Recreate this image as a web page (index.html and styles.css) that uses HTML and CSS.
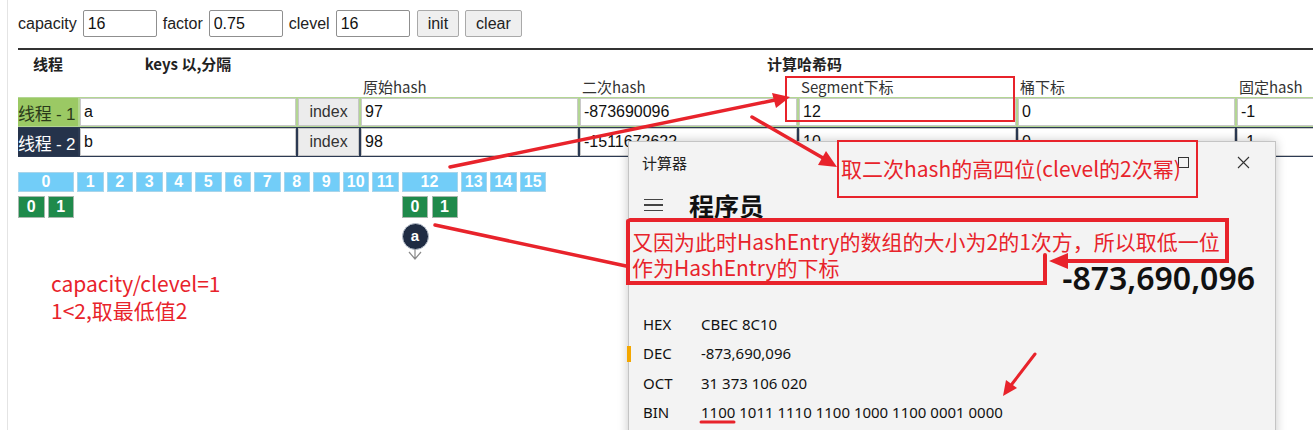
FILE: index.html
```html
<!DOCTYPE html>
<html>
<head>
<meta charset="utf-8">
<link rel="stylesheet" href="styles.css">
</head>
<body>
<div class="page">
  <div class="toolbar">
    <span class="lbl">capacity</span><input class="num" value="16">
    <span class="lbl">factor</span><input class="num" value="0.75">
    <span class="lbl">clevel</span><input class="num" value="16">
    <button class="btn btn-init">init</button><button class="btn">clear</button>
  </div>
  <div class="rule"></div>
  <div class="head1">
    <div class="c-label center">线程</div>
    <div class="c-keys center">keys 以,分隔</div>
    <div class="c-btn"></div>
    <div class="c-calc">计算哈希码</div>
  </div>
  <div class="head2">
    <div class="c-label"></div>
    <div class="c-keys"></div>
    <div class="c-btn"></div>
    <div class="c-val">原始hash</div>
    <div class="c-val">二次hash</div>
    <div class="c-val">Segment下标</div>
    <div class="c-val">桶下标</div>
    <div class="c-val">固定hash</div>
  </div>
  <div class="row r1">
    <div class="c-label tag">线程 - 1</div>
    <input class="c-keys field" value="a">
    <button class="c-btn idx">index</button>
    <input class="c-val field" value="97">
    <input class="c-val field" value="-873690096">
    <input class="c-val field" value="12">
    <input class="c-val field" value="0">
    <input class="c-val field" value="-1">
  </div>
  <div class="row r2">
    <div class="c-label tag">线程 - 2</div>
    <input class="c-keys field" value="b">
    <button class="c-btn idx">index</button>
    <input class="c-val field" value="98">
    <input class="c-val field" value="-1511672622">
    <input class="c-val field" value="10">
    <input class="c-val field" value="0">
    <input class="c-val field" value="-1">
  </div>

  <div class="segments">
    <div class="seg wide"><div class="sh">0</div><div class="entries"><div class="en">0</div><div class="en">1</div></div></div>
    <div class="seg"><div class="sh">1</div></div>
    <div class="seg"><div class="sh">2</div></div>
    <div class="seg"><div class="sh">3</div></div>
    <div class="seg"><div class="sh">4</div></div>
    <div class="seg"><div class="sh">5</div></div>
    <div class="seg"><div class="sh">6</div></div>
    <div class="seg"><div class="sh">7</div></div>
    <div class="seg"><div class="sh">8</div></div>
    <div class="seg"><div class="sh">9</div></div>
    <div class="seg"><div class="sh">10</div></div>
    <div class="seg"><div class="sh">11</div></div>
    <div class="seg wide"><div class="sh">12</div><div class="entries">
      <div class="entry-col"><div class="en">0</div><div class="node">a</div>
        <svg class="node-arrow" width="16" height="11" viewBox="0 0 16 11"><path d="M8 0 V10 M2 3 L8 10 L14 3" fill="none" stroke="#8a8a8a" stroke-width="1.2"/></svg>
      </div>
      <div class="en">1</div></div></div>
    <div class="seg"><div class="sh">13</div></div>
    <div class="seg"><div class="sh">14</div></div>
    <div class="seg"><div class="sh">15</div></div>
  </div>
</div>

<div class="calc">
  <div class="calc-title">
    <span class="calc-name">计算器</span>
    <span class="ctl-max"></span>
    <svg class="ctl-close" width="13" height="13" viewBox="0 0 13 13"><path d="M1 1 L12 12 M12 1 L1 12" stroke="#333" stroke-width="1.1"/></svg>
  </div>
  <div class="calc-mode">
    <span class="burger"><i></i><i></i><i></i></span>
    <span class="mode">程序员</span>
  </div>
  <div class="calc-display">-873,690,096</div>
  <div class="radix">
    <div class="rrow"><span class="rl">HEX</span><span>CBEC 8C10</span></div>
    <div class="rrow sel"><span class="rl">DEC</span><span>-873,690,096</span></div>
    <div class="rrow"><span class="rl">OCT</span><span>31 373 106 020</span></div>
    <div class="rrow"><span class="rl">BIN</span><span>1100 1011 1110 1100 1000 1100 0001 0000</span></div>
  </div>
</div>

<svg class="marks" width="1313" height="430" viewBox="0 0 1313 430">
  <g fill="none" stroke="#e8232b" stroke-linecap="round">
    <rect x="786" y="77" width="228" height="44" stroke-width="2"/>
    <rect x="838" y="141" width="359" height="56" stroke-width="2"/>
    <line x1="450" y1="167" x2="775" y2="100" stroke-width="3.5"/>
    <line x1="752" y1="117" x2="823" y2="158" stroke-width="3.5"/>
    <path d="M630 220 H1227 V261 H1066" stroke-width="4"/>
    <path d="M1045 255 V283 H628 V221" stroke-width="4"/>
    <line x1="435" y1="225" x2="626" y2="266" stroke-width="3.5"/>
    <line x1="1035" y1="354" x2="1012" y2="384" stroke-width="3"/>
    <line x1="701" y1="422" x2="734" y2="422" stroke-width="3"/>
  </g>
  <g fill="#e8232b">
    <polygon points="790,97 776,108 772,93"/>
    <polygon points="837,167 818,165 826,151"/>
    <polygon points="1049,261 1068,253 1068,269"/>
    <polygon points="1003,396 1006,380 1017,388"/>
  </g>
</svg>
<div class="note note-a">取二次hash的高四位(clevel的2次幂)</div>
<div class="note note-b">又因为此时HashEntry的数组的大小为2的1次方，所以取低一位<br>作为HashEntry的下标</div>
<div class="note note-c">capacity/clevel=1<br>1&lt;2,取最低值2</div>
</body>
</html>
```

FILE: styles.css
```css
* { box-sizing: border-box; }
html, body {
  margin: 0;
  padding: 0;
  width: 1313px;
  height: 430px;
  overflow: hidden;
  background: #fff;
  font-family: "Liberation Sans", "Noto Sans CJK SC", sans-serif;
  color: #222;
}
.page {
  margin-left: 7px;
  border-left: 1px solid #e4e4e4;
  padding-left: 10px;
  height: 430px;
  overflow: hidden;
}
.toolbar {
  display: flex;
  align-items: center;
  gap: 6px;
  padding-top: 10px;
  height: 37px;
  font-size: 16px;
}
.lbl { color: #222; }
.num {
  width: 74px;
  height: 27px;
  border: 1px solid #8f8f8f;
  border-radius: 2px;
  padding: 0 4px;
  font: 16px "Liberation Sans", sans-serif;
  color: #111;
}
.btn {
  height: 27px;
  padding: 0 10px;
  background: #efefef;
  border: 1px solid #a9a9a9;
  border-radius: 2px;
  font: 16px "Liberation Sans", sans-serif;
  color: #222;
}
.btn-init { margin-left: 1px; }
.rule {
  margin-top: 11px;
  height: 2px;
  background: #333;
  width: 1400px;
}
.head1, .head2, .row {
  display: flex;
  gap: 2px;
  width: 1500px;
}
.head1 {
  height: 24px;
  align-items: center;
  margin-top: 1px;
  font-family: "Noto Sans CJK SC", sans-serif;
  font-weight: 700;
  font-size: 15px;
  color: #222;
}
.head2 {
  height: 22px;
  align-items: center;
  font-family: "Noto Sans CJK SC", sans-serif;
  font-size: 15px;
  color: #333;
}
.c-label { width: 60px; flex: none; }
.c-keys { width: 216px; flex: none; }
.c-btn { width: 61px; flex: none; }
.c-val { width: 217px; flex: none; }
.center { text-align: center; }
.c-calc { padding-left: 406px; }
.head2 .c-val { padding-left: 2px; }
.row {
  height: 30px;
  padding: 1px 0;
}
.r1 { background: #b3d693; }
.r2 { background: #2c3a53; }
.tag {
  display: flex;
  align-items: center;
  padding-left: 0;
  font-family: "Liberation Sans", "Noto Sans CJK SC", sans-serif;
  font-size: 17px;
  white-space: nowrap;
  letter-spacing: -0.2px;
}
.r1 .tag { background: #9bc964; color: #2a3a1a; }
.r2 .tag { background: #25334b; color: #fff; }
.field {
  height: 28px;
  border: 1px solid #c9c9c9;
  background: #fff;
  padding: 0 3px;
  font: 16px "Liberation Sans", sans-serif;
  color: #111;
}
.idx {
  height: 28px;
  background: #ececec;
  border: 1px solid #c6c6c6;
  font: 16px "Liberation Sans", sans-serif;
  color: #333;
  padding: 0;
}
.segments {
  display: flex;
  align-items: flex-start;
  gap: 3px;
  margin-top: 15px;
}
.seg { width: 26.5px; flex: none; }
.seg.wide { width: 56px; }
.sh {
  height: 20px;
  background: #72cdf8;
  border: 1px solid #a9d5ea;
  color: #fff;
  font-weight: 700;
  font-size: 16px;
  line-height: 18px;
  text-align: center;
}
.entries {
  display: flex;
  gap: 3px;
  margin-top: 4px;
}
.entry-col {
  display: flex;
  flex-direction: column;
  align-items: center;
}
.en {
  width: 26.5px;
  height: 22px;
  background: #1f8a4b;
  border: 1px solid #a7b8ad;
  color: #fff;
  font-weight: 700;
  font-size: 16px;
  line-height: 20px;
  text-align: center;
}
.node {
  margin-top: 5px;
  width: 27px;
  height: 27px;
  border-radius: 50%;
  background: #1f2c43;
  border: 1px solid #b8c0cc;
  color: #fff;
  font-weight: 700;
  font-size: 15px;
  line-height: 24px;
  text-align: center;
}
.node-arrow { display: block; margin-top: -1px; }

.calc {
  position: absolute;
  left: 628px;
  top: 141px;
  width: 648px;
  height: 300px;
  background: #f3f3f3;
  border: 1px solid #c4c4c4;
  box-shadow: 0 0 10px rgba(0,0,0,0.22);
  font-family: "Noto Sans", "Noto Sans CJK SC", sans-serif;
  color: #111;
}
.calc-title {
  display: flex;
  align-items: center;
  height: 40px;
  padding-left: 13px;
}
.calc-name {
  flex: 1;
  font-family: "Noto Sans CJK SC", sans-serif;
  font-size: 15px;
  color: #222;
}
.ctl-max {
  width: 11px;
  height: 11px;
  border: 1px solid #333;
  margin-right: 48px;
}
.ctl-close { margin-right: 25px; }
.calc-mode {
  display: flex;
  align-items: center;
  height: 46px;
  padding-left: 15px;
}
.burger {
  display: flex;
  flex-direction: column;
  gap: 4px;
  width: 19px;
}
.burger i { display: block; height: 1.5px; background: #444; }
.mode {
  margin-left: 26px;
  font-family: "Noto Sans CJK SC", sans-serif;
  font-weight: 700;
  font-size: 25px;
  color: #111;
}
.calc-display {
  padding-top: 30px;
  height: 81px;
  line-height: 40px;
  text-align: right;
  padding-right: 20px;
  font-size: 32px;
  font-weight: 600;
  color: #111;
}
.rrow {
  position: relative;
  display: flex;
  align-items: center;
  height: 29.5px;
  padding-left: 14px;
  font-size: 15px;
  color: #111;
}
.rl { width: 58px; }
.rrow.sel::before {
  content: "";
  position: absolute;
  left: -2px;
  top: 7px;
  width: 4px;
  height: 16px;
  background: #f4a700;
}
.marks {
  position: absolute;
  left: 0;
  top: 0;
  z-index: 10;
  pointer-events: none;
}
.note {
  position: absolute;
  z-index: 11;
  color: #e8232b;
  font-family: "Noto Sans CJK SC", sans-serif;
  font-size: 21px;
  white-space: nowrap;
}
.note-a { left: 841px; top: 152px; line-height: 32px; }
.note-b { left: 632px; top: 228px; line-height: 26px; }
.note-c { left: 51px; top: 270px; line-height: 27px; }
```
